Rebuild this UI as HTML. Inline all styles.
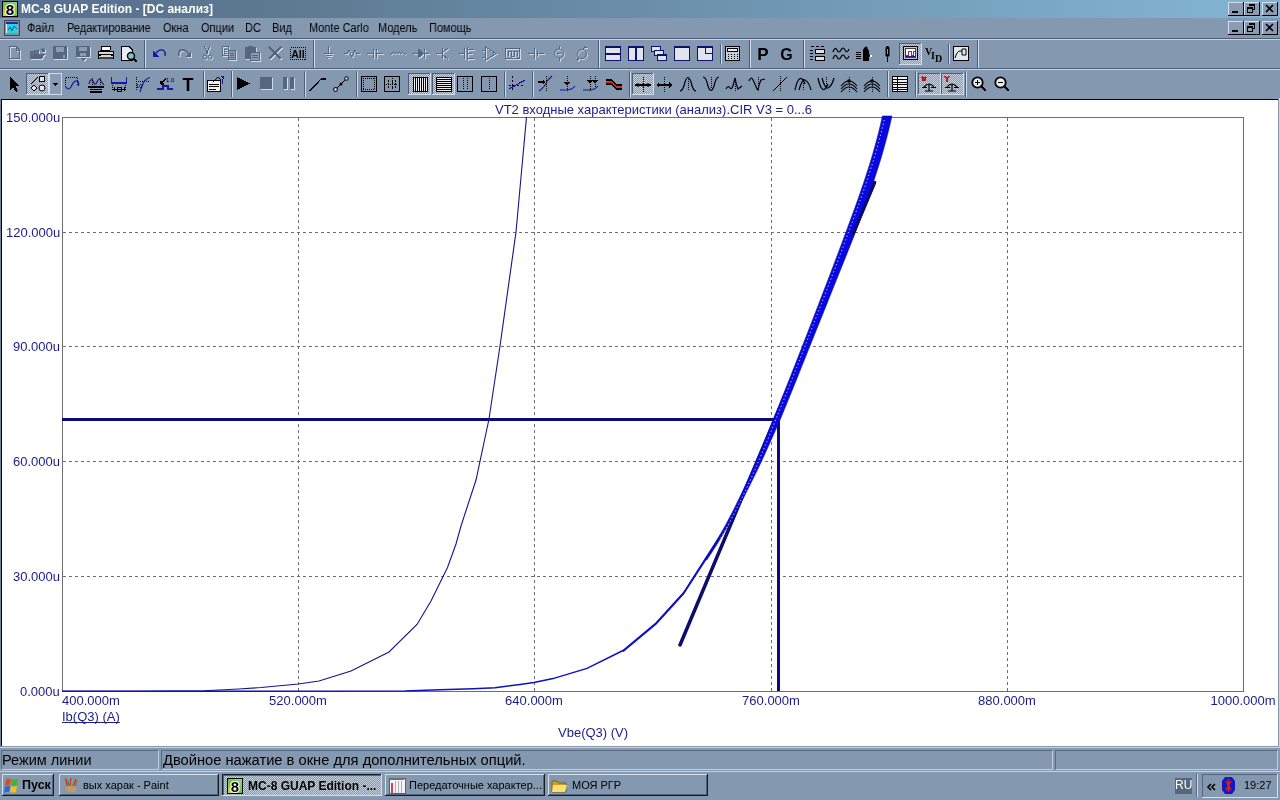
<!DOCTYPE html>
<html><head><meta charset="utf-8">
<style>
*{margin:0;padding:0;box-sizing:border-box}
html,body{width:1280px;height:800px;overflow:hidden;background:#8498b0;font-family:"Liberation Sans",sans-serif;position:relative}
.a{position:absolute}
.t{position:absolute;white-space:nowrap;line-height:1;will-change:transform}
#title{left:0;top:0;width:1280px;height:18px;background:linear-gradient(90deg,#587090 0%,#5c7890 20%,#6a8eaa 50%,#7eaeca 89%,#82b4d2 100%)}
#menu{left:0;top:18px;width:1280px;height:20px}
.mi{font-size:12px;color:#000;top:22px;transform:scaleX(0.915);transform-origin:0 0}
.hl{left:0;width:1280px;height:1px}
.wb{width:16px;height:14px;background:#8a9cb4;border-top:1px solid #d0dcea;border-left:1px solid #d0dcea;border-right:1px solid #000;border-bottom:1px solid #000}
#plot{left:0;top:98px;width:1280px;height:649px;background:#fff}
.ax{font-size:13px;color:#1c1c8a}
#status{left:0;top:747px;width:1280px;height:24px}
.sp{top:750px;height:20px;border-top:1px solid #5a6a84;border-left:1px solid #5a6a84;border-bottom:1px solid #c4d0e0;border-right:1px solid #c4d0e0}
.st{font-size:14.5px;color:#000;top:753px}
#task{left:0;top:771px;width:1280px;height:29px;border-top:1px solid #c8d4e4}
.tb{top:774px;height:23px;border-top:1px solid #d4dfec;border-left:1px solid #d4dfec;border-right:1px solid #1c2430;border-bottom:1px solid #1c2430;background:#8498b0}
.tt{font-size:11px;color:#000;top:780px}
</style></head><body>
<!-- Title bar -->
<div id="title" class="a"></div>
<div class="t" style="left:21px;top:3px;font-size:12px;font-weight:bold;color:#fff">MC-8 GUAP Edition - [DC анализ]</div>
<svg class="a" style="left:2px;top:1px" width="16" height="16" viewBox="0 0 16 16">
<defs><linearGradient id="g8" x1="0" y1="1" x2="1" y2="0"><stop offset="0" stop-color="#d8e040"/><stop offset=".45" stop-color="#70c040"/><stop offset="1" stop-color="#90d890"/></linearGradient></defs>
<rect x="0" y="0" width="16" height="16" fill="#000"/><rect x="1" y="1" width="14" height="14" fill="url(#g8)"/>
<text x="8" y="14" text-anchor="middle" font-family="Liberation Sans" font-weight="bold" font-size="15" fill="#000" stroke="#fff" stroke-width="2.2" paint-order="stroke">8</text>
</svg>

<svg class="a" style="left:1220px;top:0" width="60" height="38" viewBox="1220 0 60 38" shape-rendering="crispEdges">
<rect x="1228" y="2" width="16" height="14" fill="#8a9cb4"/><rect x="1228" y="2" width="16" height="1" fill="#d4dfec"/><rect x="1228" y="2" width="1" height="14" fill="#d4dfec"/><rect x="1228" y="15" width="16" height="1" fill="#000"/><rect x="1243" y="2" width="1" height="14" fill="#000"/><rect x="1232" y="11" width="6" height="2" fill="#000"/><rect x="1244" y="2" width="16" height="14" fill="#8a9cb4"/><rect x="1244" y="2" width="16" height="1" fill="#d4dfec"/><rect x="1244" y="2" width="1" height="14" fill="#d4dfec"/><rect x="1244" y="15" width="16" height="1" fill="#000"/><rect x="1259" y="2" width="1" height="14" fill="#000"/><path d="M1249.5 4.5H1254.5V9.5H1252.5" fill="none" stroke="#000"/><rect x="1249" y="4" width="6" height="2" fill="#000"/><rect x="1247.5" y="7.5" width="5" height="5" fill="none" stroke="#000"/><rect x="1247" y="7" width="6" height="2" fill="#000"/><rect x="1262" y="2" width="16" height="14" fill="#8a9cb4"/><rect x="1262" y="2" width="16" height="1" fill="#d4dfec"/><rect x="1262" y="2" width="1" height="14" fill="#d4dfec"/><rect x="1262" y="15" width="16" height="1" fill="#000"/><rect x="1277" y="2" width="1" height="14" fill="#000"/><path d="M1266 5L1273 12M1273 5L1266 12" stroke="#000" stroke-width="1.6" shape-rendering="auto"/><rect x="1228" y="21" width="16" height="14" fill="#8a9cb4"/><rect x="1228" y="21" width="16" height="1" fill="#d4dfec"/><rect x="1228" y="21" width="1" height="14" fill="#d4dfec"/><rect x="1228" y="34" width="16" height="1" fill="#000"/><rect x="1243" y="21" width="1" height="14" fill="#000"/><rect x="1232" y="30" width="6" height="2" fill="#000"/><rect x="1244" y="21" width="16" height="14" fill="#8a9cb4"/><rect x="1244" y="21" width="16" height="1" fill="#d4dfec"/><rect x="1244" y="21" width="1" height="14" fill="#d4dfec"/><rect x="1244" y="34" width="16" height="1" fill="#000"/><rect x="1259" y="21" width="1" height="14" fill="#000"/><path d="M1249.5 23.5H1254.5V28.5H1252.5" fill="none" stroke="#000"/><rect x="1249" y="23" width="6" height="2" fill="#000"/><rect x="1247.5" y="26.5" width="5" height="5" fill="none" stroke="#000"/><rect x="1247" y="26" width="6" height="2" fill="#000"/><rect x="1262" y="21" width="16" height="14" fill="#8a9cb4"/><rect x="1262" y="21" width="16" height="1" fill="#d4dfec"/><rect x="1262" y="21" width="1" height="14" fill="#d4dfec"/><rect x="1262" y="34" width="16" height="1" fill="#000"/><rect x="1277" y="21" width="1" height="14" fill="#000"/><path d="M1266 24L1273 31M1273 24L1266 31" stroke="#000" stroke-width="1.6" shape-rendering="auto"/></svg>
<!-- Menu bar -->
<svg class="a" style="left:4px;top:20px" width="16" height="16" viewBox="0 0 16 16" shape-rendering="crispEdges">
<rect x="0" y="0" width="16" height="16" fill="#404858"/><rect x="1" y="1" width="14" height="14" fill="#8a8aa0"/>
<rect x="2" y="2" width="12" height="2" fill="#2828a0"/><rect x="2" y="4" width="12" height="9" fill="#20d8e0"/><rect x="2" y="4" width="1" height="9" fill="#f0f0f0"/>
<path d="M4 10L6 7L8 11L10 6L13 9" fill="none" stroke="#1050a0" shape-rendering="auto"/>
</svg>
<div class="t mi" style="left:27px">Файл</div>
<div class="t mi" style="left:67px">Редактирование</div>
<div class="t mi" style="left:163px">Окна</div>
<div class="t mi" style="left:201px">Опции</div>
<div class="t mi" style="left:245px">DC</div>
<div class="t mi" style="left:272px">Вид</div>
<div class="t mi" style="left:309px">Monte Carlo</div>
<div class="t mi" style="left:378px">Модель</div>
<div class="t mi" style="left:429px">Помощь</div>

<div class="a hl" style="top:38px;background:#4e5e78"></div>
<div class="a hl" style="top:39px;background:#c4d4e8"></div>
<div class="a hl" style="top:68px;background:#4e5e78"></div>
<div class="a hl" style="top:69px;background:#c4d4e8"></div>

<svg class="a" style="left:0;top:0" width="1280" height="100" viewBox="0 0 1280 100" shape-rendering="crispEdges">
<!--TB-->
<defs><pattern id="dith" width="2" height="2" patternUnits="userSpaceOnUse"><rect width="2" height="2" fill="#8498b0"/><rect width="1" height="1" fill="#c8d4e2"/><rect x="1" y="1" width="1" height="1" fill="#c8d4e2"/></pattern></defs>
<g transform="translate(10,47)" style="--c:#d0dcea"><path d="M0.5 0.5H7L10.5 4V12.5H0.5Z" fill="none" stroke="#d0dcea"/><path d="M7 0.5V4.5H10.5" fill="none" stroke="#d0dcea"/></g>
<g transform="translate(9,46)"><path d="M0.5 0.5H7L10.5 4V12.5H0.5Z" fill="none" stroke="#56667e"/><path d="M7 0.5V4.5H10.5" fill="none" stroke="#56667e"/></g>
<g transform="translate(31,48)" style="--c:#d0dcea"><path d="M0 4H3L4 3H9V12H0Z" fill="#d0dcea" opacity=".9"/><path d="M1 12L4 7H15L12 12Z" fill="#d0dcea"/><path shape-rendering="auto" d="M10 3Q12 0 14 2L15 1V5H11L12 4Q11 2 10 3" fill="#d0dcea"/></g>
<g transform="translate(30,47)"><path d="M0 4H3L4 3H9V12H0Z" fill="#56667e" opacity=".9"/><path d="M1 12L4 7H15L12 12Z" fill="#56667e"/><path shape-rendering="auto" d="M10 3Q12 0 14 2L15 1V5H11L12 4Q11 2 10 3" fill="#56667e"/></g>
<g transform="translate(54,47)" style="--c:#d0dcea"><path d="M0 0H14V13H0Z" fill="#d0dcea"/><rect x="3" y="1" width="8" height="5" fill="#8a9cb2"/><rect x="10" y="9" width="2" height="3" fill="#8a9cb2"/></g>
<g transform="translate(53,46)"><path d="M0 0H14V13H0Z" fill="#56667e"/><rect x="3" y="1" width="8" height="5" fill="#8a9cb2"/><rect x="10" y="9" width="2" height="3" fill="#8a9cb2"/></g>
<g transform="translate(77,47)" style="--c:#d0dcea"><path d="M0 0H14V11H0Z" fill="#d0dcea"/><rect x="3" y="1" width="8" height="4" fill="#8a9cb2"/><rect x="4" y="7" width="6" height="3" fill="#8a9cb2"/><path d="M4 12H10L7 15Z" fill="#d0dcea"/></g>
<g transform="translate(76,46)"><path d="M0 0H14V11H0Z" fill="#56667e"/><rect x="3" y="1" width="8" height="4" fill="#8a9cb2"/><rect x="4" y="7" width="6" height="3" fill="#8a9cb2"/><path d="M4 12H10L7 15Z" fill="#56667e"/></g>
<g transform="translate(98,46)"><path d="M4 0H13L12 4H3Z" fill="#fff" stroke="#000" stroke-width="1"/><path d="M0.5 5.5H15.5V12.5H0.5Z" fill="#d8d8d8" stroke="#000"/><rect x="1" y="8" width="14" height="2" fill="#000"/><rect x="3" y="9" width="10" height="1" fill="#e0e0a0"/><rect x="1" y="11" width="14" height="2" fill="#404040"/></g>
<g transform="translate(121,46)"><path d="M0.5 0.5H8L11.5 4V14.5H0.5Z" fill="#e8ecf0" stroke="#000"/><circle shape-rendering="auto" cx="10" cy="10" r="3.5" fill="#80c0d0" stroke="#000" stroke-width="1.4"/><path d="M12.5 12.5L16 16" stroke="#000" stroke-width="2"/></g>
<rect x="144" y="40" width="1" height="28" fill="#4e5e78"/><rect x="145" y="40" width="1" height="28" fill="#d0dcea"/>
<g transform="translate(153,48)"><path shape-rendering="auto" d="M2 6Q6 1 10 2Q13 4 12 8" fill="none" stroke="#1818a0" stroke-width="1.4"/><path d="M0 3L0 9L6 9Z" fill="#1818a0"/></g>
<g transform="translate(178,49)" style="--c:#d0dcea"><path shape-rendering="auto" d="M12 6Q8 1 4 2Q1 4 2 8" fill="none" stroke="#d0dcea" stroke-width="1.6"/><path d="M14 3L14 9L8 9Z" fill="#d0dcea"/></g>
<g transform="translate(177,48)"><path shape-rendering="auto" d="M12 6Q8 1 4 2Q1 4 2 8" fill="none" stroke="#56667e" stroke-width="1.6"/><path d="M14 3L14 9L8 9Z" fill="#56667e"/></g>
<g transform="translate(203,47)" style="--c:#d0dcea"><path d="M2 0L6 8M8 0L4 8" stroke="#d0dcea" stroke-width="1.2" fill="none"/><circle shape-rendering="auto" cx="3" cy="11" r="2" fill="none" stroke="#d0dcea"/><circle shape-rendering="auto" cx="8" cy="11" r="2" fill="none" stroke="#d0dcea"/></g>
<g transform="translate(202,46)"><path d="M2 0L6 8M8 0L4 8" stroke="#56667e" stroke-width="1.2" fill="none"/><circle shape-rendering="auto" cx="3" cy="11" r="2" fill="none" stroke="#56667e"/><circle shape-rendering="auto" cx="8" cy="11" r="2" fill="none" stroke="#56667e"/></g>
<g transform="translate(223,47)" style="--c:#d0dcea"><path d="M0.5 0.5H6.5V9.5H0.5Z" fill="none" stroke="#d0dcea"/><path d="M1.5 3H5M1.5 5H5M1.5 7H5" stroke="#d0dcea"/><path d="M6.5 4.5H13.5V13.5H6.5Z" fill="#8a9cb2" stroke="#d0dcea"/><path d="M8 7H12M8 9H12M8 11H12" stroke="#d0dcea"/></g>
<g transform="translate(222,46)"><path d="M0.5 0.5H6.5V9.5H0.5Z" fill="none" stroke="#56667e"/><path d="M1.5 3H5M1.5 5H5M1.5 7H5" stroke="#56667e"/><path d="M6.5 4.5H13.5V13.5H6.5Z" fill="#8a9cb2" stroke="#56667e"/><path d="M8 7H12M8 9H12M8 11H12" stroke="#56667e"/></g>
<g transform="translate(246,47)" style="--c:#d0dcea"><path d="M0 1H11V13H0Z" fill="#d0dcea"/><rect x="3" y="0" width="5" height="3" fill="#d0dcea"/><path d="M5.5 6.5H14.5V14.5H5.5Z" fill="#8a9cb2" stroke="#d0dcea"/><path d="M7 9H13M7 11H13" stroke="#d0dcea"/></g>
<g transform="translate(245,46)"><path d="M0 1H11V13H0Z" fill="#56667e"/><rect x="3" y="0" width="5" height="3" fill="#56667e"/><path d="M5.5 6.5H14.5V14.5H5.5Z" fill="#8a9cb2" stroke="#56667e"/><path d="M7 9H13M7 11H13" stroke="#56667e"/></g>
<g transform="translate(269,48)" style="--c:#d0dcea"><path d="M1 0L13 12M13 0L1 12" stroke="#d0dcea" stroke-width="1.6"/></g>
<g transform="translate(268,47)"><path d="M1 0L13 12M13 0L1 12" stroke="#56667e" stroke-width="1.6"/></g>
<g transform="translate(290,47)"><rect x="0.5" y="0.5" width="15" height="12" fill="none" stroke="#000" stroke-dasharray="1 1"/><text x="8" y="10.5" font-family="Liberation Sans" font-weight="bold" font-size="10.5" text-anchor="middle" fill="#000">All</text></g>
<rect x="313" y="40" width="1" height="28" fill="#4e5e78"/><rect x="314" y="40" width="1" height="28" fill="#d0dcea"/>
<g transform="translate(322,47)" style="--c:#d0dcea"><path d="M7.5 0V7M3 7.5H12M4.5 9.5H10.5M6 11.5H9" stroke="#d0dcea" fill="none"/></g>
<g transform="translate(321,46)"><path d="M7.5 0V7M3 7.5H12M4.5 9.5H10.5M6 11.5H9" stroke="#56667e" fill="none"/></g>
<g transform="translate(345,47)" style="--c:#d0dcea"><path d="M0 7.5H3L5 4L8 11L11 4L13 7.5H16" stroke="#d0dcea" fill="none"/></g>
<g transform="translate(344,46)"><path d="M0 7.5H3L5 4L8 11L11 4L13 7.5H16" stroke="#56667e" fill="none"/></g>
<g transform="translate(368,47)" style="--c:#d0dcea"><path d="M0 7.5H6M10 7.5H16M6.5 3V12M9.5 3V12" stroke="#d0dcea" fill="none"/></g>
<g transform="translate(367,46)"><path d="M0 7.5H6M10 7.5H16M6.5 3V12M9.5 3V12" stroke="#56667e" fill="none"/></g>
<g transform="translate(391,47)" style="--c:#d0dcea"><path shape-rendering="auto" d="M0 8H2Q3 4 5 8Q6 4 8 8Q9 4 11 8Q12 4 14 8H16" stroke="#d0dcea" fill="none"/></g>
<g transform="translate(390,46)"><path shape-rendering="auto" d="M0 8H2Q3 4 5 8Q6 4 8 8Q9 4 11 8Q12 4 14 8H16" stroke="#56667e" fill="none"/></g>
<g transform="translate(414,47)" style="--c:#d0dcea"><path d="M0 7.5H16M5 3L11 7.5L5 12Z M11.5 3V12" stroke="#d0dcea" fill="#d0dcea"/></g>
<g transform="translate(413,46)"><path d="M0 7.5H16M5 3L11 7.5L5 12Z M11.5 3V12" stroke="#56667e" fill="#56667e"/></g>
<g transform="translate(437,47)" style="--c:#d0dcea"><path d="M0 7.5H6M6.5 2V13M7 6L12 2M7 9L12 13" stroke="#d0dcea" fill="none"/></g>
<g transform="translate(436,46)"><path d="M0 7.5H6M6.5 2V13M7 6L12 2M7 9L12 13" stroke="#56667e" fill="none"/></g>
<g transform="translate(460,47)" style="--c:#d0dcea"><path d="M0 7.5H5M5.5 2V13M8.5 1V14M9 3H15M9 7.5H13M9 12H15" stroke="#d0dcea" fill="none"/></g>
<g transform="translate(459,46)"><path d="M0 7.5H5M5.5 2V13M8.5 1V14M9 3H15M9 7.5H13M9 12H15" stroke="#56667e" fill="none"/></g>
<g transform="translate(483,47)" style="--c:#d0dcea"><path d="M3.5 1V14L14 7.5Z M0 4H3M0 11H3" stroke="#d0dcea" fill="none"/></g>
<g transform="translate(482,46)"><path d="M3.5 1V14L14 7.5Z M0 4H3M0 11H3" stroke="#56667e" fill="none"/></g>
<g transform="translate(506,47)" style="--c:#d0dcea"><path d="M0.5 2.5H14.5V12.5H0.5Z M3 10V5H6V10H9V5H12V10" stroke="#d0dcea" fill="none"/></g>
<g transform="translate(505,46)"><path d="M0.5 2.5H14.5V12.5H0.5Z M3 10V5H6V10H9V5H12V10" stroke="#56667e" fill="none"/></g>
<g transform="translate(529,47)" style="--c:#d0dcea"><path d="M0 7.5H6M10 7.5H16M6.5 2V13M9.5 5V10" stroke="#d0dcea" fill="none"/></g>
<g transform="translate(528,46)"><path d="M0 7.5H6M10 7.5H16M6.5 2V13M9.5 5V10" stroke="#56667e" fill="none"/></g>
<g transform="translate(552,47)" style="--c:#d0dcea"><circle shape-rendering="auto" cx="8" cy="7.5" r="4.5" stroke="#d0dcea" fill="none"/><path d="M8 0V3M8 12V15M6 7H10" stroke="#d0dcea"/></g>
<g transform="translate(551,46)"><circle shape-rendering="auto" cx="8" cy="7.5" r="4.5" stroke="#56667e" fill="none"/><path d="M8 0V3M8 12V15M6 7H10" stroke="#56667e"/></g>
<g transform="translate(575,47)" style="--c:#d0dcea"><circle shape-rendering="auto" cx="8" cy="8" r="4.5" stroke="#d0dcea" fill="none"/><path d="M11 0L9 4M5 12L3 15M10 1H13" stroke="#d0dcea"/></g>
<g transform="translate(574,46)"><circle shape-rendering="auto" cx="8" cy="8" r="4.5" stroke="#56667e" fill="none"/><path d="M11 0L9 4M5 12L3 15M10 1H13" stroke="#56667e"/></g>
<rect x="598" y="40" width="1" height="28" fill="#4e5e78"/><rect x="599" y="40" width="1" height="28" fill="#d0dcea"/>
<g transform="translate(605,46)"><rect x="0.5" y="0.5" width="15" height="14" fill="#e0e4ec" stroke="#10106e"/><rect x="0" y="0" width="16" height="2" fill="#10106e"/><rect x="0" y="7" width="16" height="2" fill="#10106e"/></g>
<g transform="translate(628,46)"><rect x="0.5" y="0.5" width="15" height="14" fill="#e0e4ec" stroke="#10106e"/><rect x="0" y="0" width="16" height="2" fill="#10106e"/><rect x="7" y="0" width="2" height="15" fill="#10106e"/></g>
<g transform="translate(651,46)"><rect x="0.5" y="0.5" width="9" height="5" fill="#e0e4ec" stroke="#10106e"/><rect x="3.5" y="4.5" width="9" height="5" fill="#e0e4ec" stroke="#10106e"/><rect x="6.5" y="8.5" width="9" height="6" fill="#e0e4ec" stroke="#10106e"/><rect x="6" y="8" width="10" height="2" fill="#10106e"/></g>
<g transform="translate(674,46)"><rect x="0.5" y="0.5" width="15" height="14" fill="#e0e4ec" stroke="#10106e"/><rect x="0" y="0" width="16" height="2" fill="#10106e"/></g>
<g transform="translate(697,46)"><rect x="0.5" y="0.5" width="15" height="14" fill="#e0e4ec" stroke="#10106e"/><rect x="0" y="0" width="16" height="2" fill="#10106e"/><path d="M8.5 1V7.5H15" fill="none" stroke="#10106e"/></g>
<rect x="720" y="44" width="1" height="20" fill="#4e5e78"/><rect x="721" y="44" width="1" height="20" fill="#d0dcea"/>
<g transform="translate(725,46)"><rect x="0.5" y="0.5" width="14" height="14" rx="1" fill="#c8ccd4" stroke="#000"/><rect x="2.5" y="2.5" width="10" height="3" fill="#e8ecf0" stroke="#000"/><path d="M3 8H4M6 8H7M9 8H10M12 8H13M3 10H4M6 10H7M9 10H10M12 10H13M3 12H4M6 12H7M9 12H10M12 12H13" stroke="#000"/></g>
<rect x="749" y="40" width="1" height="28" fill="#4e5e78"/><rect x="750" y="40" width="1" height="28" fill="#d0dcea"/>
<text x="763" y="60" font-family="Liberation Sans" font-weight="bold" font-size="17" text-anchor="middle" fill="#000">P</text>
<text x="786.5" y="60" font-family="Liberation Sans" font-weight="bold" font-size="16" text-anchor="middle" fill="#000">G</text>
<rect x="803" y="40" width="1" height="28" fill="#4e5e78"/><rect x="804" y="40" width="1" height="28" fill="#d0dcea"/>
<g transform="translate(810,46)"><path d="M1 0.5H4M6 0.5H9M11 0.5H14" stroke="#000" stroke-width="1.4"/><path d="M0 4H3M0 7H3M0 10H3M0 13H3" stroke="#000"/><rect x="5.5" y="3.5" width="9" height="4" fill="#e0e0e0" stroke="#000"/><rect x="5.5" y="10.5" width="9" height="4" fill="#e0e0e0" stroke="#000"/></g>
<g transform="translate(833,46)"><path shape-rendering="auto" d="M0 6Q2 0 4 4Q6 8 8 4Q10 0 12 4Q14 8 16 3M0 13Q2 7 4 11Q6 15 8 11Q10 7 12 11Q14 15 16 10" fill="none" stroke="#000" stroke-width="1.2"/></g>
<g transform="translate(856,46)"><path d="M0 6H5M0 8H5M0 10H5M0 12H5" stroke="#000"/><path shape-rendering="auto" d="M9 2Q7 2 7 5V15H13V11L15 10L13 8V5Q12 2 9 2Z" fill="#000"/><circle shape-rendering="auto" cx="10" cy="2" r="1.6" fill="#000"/><rect x="14" y="9" width="2" height="2" fill="#fff"/></g>
<g transform="translate(885,46)"><path shape-rendering="auto" d="M2.5 0Q0.5 0 0.5 3V10L2.5 11L4.5 10V3Q4.5 0 2.5 0Z" fill="#000"/><path d="M2.5 11V16" stroke="#000" stroke-width="1.4"/><rect x="2" y="3" width="1" height="5" fill="#8a9cb2"/></g>
<rect x="899" y="43" width="23" height="22" fill="url(#dith)"/>
<rect x="899" y="43" width="23" height="1" fill="#4e5e78"/><rect x="899" y="43" width="1" height="22" fill="#4e5e78"/>
<rect x="899" y="64" width="23" height="1" fill="#d0dcea"/><rect x="921" y="43" width="1" height="22" fill="#d0dcea"/>
<g transform="translate(903,46)"><rect x="0.5" y="0.5" width="14" height="13" fill="#c8c8d0" stroke="#000"/><rect x="2.5" y="2.5" width="10" height="9" fill="#fff" stroke="#404040"/><path d="M3 9H5V5H8V9H10V5H12" fill="none" stroke="#c02020"/><path d="M3 10H12" stroke="#1818a0"/></g>
<g transform="translate(925,46)"><text x="0" y="9" font-family="Liberation Serif" font-weight="bold" font-size="10" fill="#000">V</text><text x="6" y="13" font-family="Liberation Serif" font-weight="bold" font-size="10" fill="#000">I</text><text x="10" y="16" font-family="Liberation Serif" font-weight="bold" font-size="10" fill="#000">D</text></g>
<rect x="948" y="44" width="1" height="20" fill="#4e5e78"/><rect x="949" y="44" width="1" height="20" fill="#d0dcea"/>
<g transform="translate(953,46)"><rect x="0.5" y="0.5" width="15" height="14" fill="#e4e8ee" stroke="#000" stroke-width="1.2"/><path shape-rendering="auto" d="M2 12Q4 5 7 5H9V3H13V9H9V5" fill="none" stroke="#000"/></g>
<rect x="977" y="40" width="1" height="28" fill="#4e5e78"/><rect x="978" y="40" width="1" height="28" fill="#d0dcea"/>
<g transform="translate(10,77)"><path d="M0 0V13L3 10L6 15L8 14L5.5 9H9.5Z" fill="#000"/></g>
<rect x="26" y="73" width="23" height="22" fill="url(#dith)"/>
<rect x="26" y="73" width="23" height="1" fill="#4e5e78"/><rect x="26" y="73" width="1" height="22" fill="#4e5e78"/>
<rect x="26" y="94" width="23" height="1" fill="#d0dcea"/><rect x="48" y="73" width="1" height="22" fill="#d0dcea"/>
<g transform="translate(30,76)"><path d="M1 8L8 1" stroke="#000" stroke-width="1.2"/><rect x="9.5" y="0.5" width="5" height="5" fill="#e0e4ea" stroke="#000"/><path d="M4 9L7 12L4 15L1 12Z" fill="#e0e4ea" stroke="#000"/><circle shape-rendering="auto" cx="12" cy="12" r="3" fill="#e0e4ea" stroke="#000" shape-rendering="auto"/></g>
<rect x="49" y="73" width="13" height="22" fill="#8a9cb4"/><rect x="49" y="73" width="13" height="1" fill="#d0dcea"/><rect x="49" y="73" width="1" height="22" fill="#d0dcea"/><rect x="49" y="94" width="13" height="1" fill="#d0dcea"/><rect x="61" y="73" width="1" height="22" fill="#d0dcea"/>
<path d="M52 83H58L55 86Z" fill="#000"/>
<g transform="translate(65,77)"><path d="M0.5 0.5H12.5V8" fill="none" stroke="#000" stroke-dasharray="1 1"/><path d="M0.5 0.5V10" fill="none" stroke="#000" stroke-dasharray="1 1"/><path shape-rendering="auto" d="M1 10Q3 14 6 10Q9 3 12 4Q15 6 13 9" fill="none" stroke="#1818a0" stroke-width="1.2"/></g>
<g transform="translate(88,77)"><path shape-rendering="auto" d="M1 7Q3 0 5 4Q7 10 9 5Q11 0 13 4L16 8" fill="none" stroke="#1818a0" stroke-width="1.2"/><path d="M0 10H16M2 12.5H14M2 15H14" stroke="#000" stroke-width="1.2"/><path d="M4 1V9M12 1V9" stroke="#000" stroke-dasharray="1 1"/></g>
<g transform="translate(111,77)"><path d="M0.5 0V6H15.5V0" fill="none" stroke="#1818a0" stroke-width="1.2"/><path d="M1.5 6V13M14.5 6V13" stroke="#000" stroke-dasharray="1 1"/><path d="M2 12H14M3 10V14M13 10V14" stroke="#000"/><rect x="6" y="10" width="4" height="4" fill="none" stroke="#000"/></g>
<g transform="translate(135,77)"><path d="M1.5 0V14" stroke="#000" stroke-dasharray="1 1"/><path d="M1 4H15" stroke="#000" stroke-dasharray="1 1"/><path shape-rendering="auto" d="M5 15Q9 2 11 3Q13 0 15 1" fill="none" stroke="#1818a0" stroke-width="1.2"/><text x="1" y="11" font-family="Liberation Sans" font-size="6" fill="#000">10</text></g>
<g transform="translate(157,76)"><path d="M0 13H6V10H11V13H16" fill="none" stroke="#1818a0" stroke-width="1.4"/><path d="M9 2L4 8M4 8V5M4 8H7" stroke="#000" stroke-width="1.2" fill="none"/><text x="9" y="6" font-family="Liberation Sans" font-size="6" fill="#000">1.0</text></g>
<text x="188" y="91" font-family="Liberation Sans" font-weight="bold" font-size="18" text-anchor="middle" fill="#000">T</text>
<rect x="203" y="71" width="1" height="26" fill="#4e5e78"/><rect x="204" y="71" width="1" height="26" fill="#d0dcea"/>
<g transform="translate(207,76)"><path d="M0.5 4.5H13.5V15.5H0.5Z" fill="#f0f0f0" stroke="#000" stroke-width="1.2"/><path d="M2 8H12M2 10.5H12M2 13H9" stroke="#000"/><path d="M6 6L11 1L14 4" fill="none" stroke="#000" stroke-width="1.4"/><path d="M13 0H17V4Z" fill="#1818a0"/><path d="M15.5 3V8" stroke="#1818a0" stroke-width="1.4"/></g>
<rect x="231" y="71" width="1" height="26" fill="#4e5e78"/><rect x="232" y="71" width="1" height="26" fill="#d0dcea"/>
<g transform="translate(237,77)"><path d="M0 0L13 6.5L0 13Z" fill="#000"/></g>
<g transform="translate(261,78)" style="--c:#d0dcea"><rect x="0" y="0" width="12" height="12" fill="#d0dcea"/></g>
<g transform="translate(260,77)"><rect x="0" y="0" width="12" height="12" fill="#56667e"/></g>
<g transform="translate(284,78)" style="--c:#d0dcea"><rect x="0" y="0" width="4" height="12" fill="#d0dcea"/><rect x="7" y="0" width="4" height="12" fill="#d0dcea"/></g>
<g transform="translate(283,77)"><rect x="0" y="0" width="4" height="12" fill="#56667e"/><rect x="7" y="0" width="4" height="12" fill="#56667e"/></g>
<rect x="304" y="71" width="1" height="26" fill="#4e5e78"/><rect x="305" y="71" width="1" height="26" fill="#d0dcea"/>
<g transform="translate(310,77)"><path d="M0 14L9 4L11 2H16" fill="none" stroke="#000" stroke-width="1.4"/></g>
<g transform="translate(333,77)"><path d="M2 13L13 2" stroke="#000" stroke-width="1.2"/><circle shape-rendering="auto" cx="2.5" cy="12.5" r="2" fill="#c0c8d0" stroke="#000"/><circle shape-rendering="auto" cx="8" cy="7" r="1.5" fill="#000"/><circle shape-rendering="auto" cx="13.5" cy="1.5" r="1.8" fill="#c0c8d0" stroke="#000"/></g>
<rect x="356" y="71" width="1" height="26" fill="#4e5e78"/><rect x="357" y="71" width="1" height="26" fill="#d0dcea"/>
<g transform="translate(361,76)"><rect x="0.5" y="0.5" width="15" height="15" fill="none" stroke="#000" stroke-width="1.2"/><path d="M2.5 2V14M13.5 2V14M2 2.5H14M2 13.5H14" stroke="#000" stroke-dasharray="1 1"/></g>
<g transform="translate(384,76)"><rect x="0.5" y="0.5" width="15" height="15" fill="none" stroke="#000" stroke-width="1.2"/><path d="M4 5H5M7.5 5H8.5M11 5H12M4 8H5M7.5 8H8.5M11 8H12M4 11H5M7.5 11H8.5M11 11H12" stroke="#000" stroke-width="1.5"/><path d="M8 2V14M2 8H14" stroke="#000" stroke-dasharray="1 1"/></g>
<rect x="408" y="73" width="23" height="22" fill="url(#dith)"/>
<rect x="408" y="73" width="23" height="1" fill="#4e5e78"/><rect x="408" y="73" width="1" height="22" fill="#4e5e78"/>
<rect x="408" y="94" width="23" height="1" fill="#d0dcea"/><rect x="430" y="73" width="1" height="22" fill="#d0dcea"/>
<rect x="413" y="77" width="15" height="15" fill="#000"/><rect x="414" y="78" width="1" height="13" fill="#f0f0f0"/><rect x="416" y="78" width="1" height="13" fill="#f0f0f0"/><rect x="418" y="78" width="1" height="13" fill="#f0f0f0"/><rect x="420" y="78" width="1" height="13" fill="#f0f0f0"/><rect x="422" y="78" width="1" height="13" fill="#f0f0f0"/><rect x="424" y="78" width="1" height="13" fill="#f0f0f0"/><rect x="426" y="78" width="1" height="13" fill="#f0f0f0"/>
<rect x="432" y="73" width="23" height="22" fill="url(#dith)"/>
<rect x="432" y="73" width="23" height="1" fill="#4e5e78"/><rect x="432" y="73" width="1" height="22" fill="#4e5e78"/>
<rect x="432" y="94" width="23" height="1" fill="#d0dcea"/><rect x="454" y="73" width="1" height="22" fill="#d0dcea"/>
<rect x="436" y="77" width="16" height="15" fill="#000"/><rect x="437" y="78" width="14" height="1" fill="#f0f0f0"/><rect x="437" y="80" width="14" height="1" fill="#f0f0f0"/><rect x="437" y="82" width="14" height="1" fill="#f0f0f0"/><rect x="437" y="84" width="14" height="1" fill="#f0f0f0"/><rect x="437" y="86" width="14" height="1" fill="#f0f0f0"/><rect x="437" y="88" width="14" height="1" fill="#f0f0f0"/><rect x="437" y="90" width="14" height="1" fill="#f0f0f0"/>
<g transform="translate(457,76)"><rect x="0.5" y="0.5" width="15" height="15" fill="none" stroke="#000" stroke-width="1.2"/><path d="M6 2V14M10 2V14" stroke="#000" stroke-dasharray="1 1"/></g>
<g transform="translate(481,76)"><rect x="0.5" y="0.5" width="15" height="15" fill="none" stroke="#000" stroke-width="1.2"/><path d="M8 2V14" stroke="#000" stroke-dasharray="1 1"/></g>
<rect x="504" y="71" width="1" height="26" fill="#4e5e78"/><rect x="505" y="71" width="1" height="26" fill="#d0dcea"/>
<g transform="translate(509,76)"><path d="M0 13L16 4" stroke="#1818a0" stroke-width="1.2"/><path d="M3.5 0V16M0 9H16" stroke="#000" stroke-dasharray="2 2"/></g>
<rect x="532" y="71" width="1" height="26" fill="#4e5e78"/><rect x="533" y="71" width="1" height="26" fill="#d0dcea"/>
<g transform="translate(538,76)"><path shape-rendering="auto" d="M1 15Q8 10 9 5L14 0" fill="none" stroke="#1818a0" stroke-width="1.2"/><path d="M8 0V16" stroke="#000" stroke-dasharray="1 1"/><path d="M0 6H7M5 4L7 6L5 8" stroke="#000" stroke-width="1.4" fill="none"/></g>
<g transform="translate(560,76)"><path shape-rendering="auto" d="M0 14H6Q12 14 15 10" fill="none" stroke="#1818a0" stroke-width="1.2"/><path d="M7 0V16" stroke="#000" stroke-dasharray="1 1"/><path d="M4 6L7 10L10 6Z" fill="#000"/></g>
<g transform="translate(583,76)"><path shape-rendering="auto" d="M0 14H6Q12 14 15 10" fill="none" stroke="#1818a0" stroke-width="1.2"/><path d="M7 0V16M12 0V12" stroke="#000" stroke-dasharray="1 1"/><path d="M4 4L7 8L10 4ZM9 4L12 8L15 4Z" fill="#000"/></g>
<g transform="translate(606,78)"><path d="M0 2H6L10 7H16" fill="none" stroke="#000" stroke-width="1.2"/><path d="M0 4H6L10 9H16" fill="none" stroke="#d03030" stroke-width="1.2"/><path d="M0 6H6L10 11H16" fill="none" stroke="#000" stroke-width="1.2"/></g>
<rect x="629" y="71" width="1" height="26" fill="#4e5e78"/><rect x="630" y="71" width="1" height="26" fill="#d0dcea"/>
<rect x="632" y="73" width="22" height="22" fill="url(#dith)"/>
<rect x="632" y="73" width="22" height="1" fill="#4e5e78"/><rect x="632" y="73" width="1" height="22" fill="#4e5e78"/>
<rect x="632" y="94" width="22" height="1" fill="#d0dcea"/><rect x="653" y="73" width="1" height="22" fill="#d0dcea"/>
<g transform="translate(635,77)"><path d="M8 0V15" stroke="#000" stroke-dasharray="1 1"/><path d="M0 8H16" stroke="#000" stroke-width="1.4"/><circle shape-rendering="auto" cx="3" cy="8" r="1.7" fill="#000"/><circle shape-rendering="auto" cx="8" cy="8" r="1.7" fill="#000"/><circle shape-rendering="auto" cx="13" cy="8" r="1.7" fill="#000"/></g>
<g transform="translate(656,77)"><path d="M8 0V15" stroke="#000" stroke-dasharray="1 1"/><path d="M1 8H15" stroke="#000" stroke-width="1.4"/><path d="M0 8L3 5V11ZM16 8L13 5V11Z" fill="#000"/></g>
<g transform="translate(680,76)"><path shape-rendering="auto" d="M0 15Q3 15 5 6Q8 -3 11 6Q13 15 16 15" fill="none" stroke="#000" stroke-width="1.2"/><path d="M8 3V15" stroke="#000" stroke-dasharray="1 1"/></g>
<g transform="translate(703,76)"><path shape-rendering="auto" d="M0 1Q3 1 5 10Q8 19 11 10Q13 1 16 1" fill="none" stroke="#000" stroke-width="1.2"/><path d="M8 1V13" stroke="#000" stroke-dasharray="1 1"/></g>
<g transform="translate(726,76)"><path shape-rendering="auto" d="M0 13Q2 9 4 12Q6 15 8 6L9 2Q10 8 12 13L16 10" fill="none" stroke="#000" stroke-width="1.2"/><path d="M9 2V15" stroke="#000" stroke-dasharray="1 1"/></g>
<g transform="translate(749,76)"><path shape-rendering="auto" d="M0 5Q2 0 4 4Q6 8 8 13L9 14Q10 8 12 4L16 3" fill="none" stroke="#000" stroke-width="1.2"/><path d="M9 1V14" stroke="#000" stroke-dasharray="1 1"/></g>
<g transform="translate(772,76)"><path d="M1 15L15 1" stroke="#000" stroke-width="1.2"/><path d="M8 0V16" stroke="#000" stroke-dasharray="1 1"/></g>
<g transform="translate(795,76)"><path shape-rendering="auto" d="M0 14Q3 0 7 3Q9 5 10 8M4 14Q7 3 10 4Q14 6 16 14" fill="none" stroke="#000" stroke-width="1.2"/><path d="M8 3V15" stroke="#000" stroke-dasharray="1 1"/></g>
<g transform="translate(818,76)"><path shape-rendering="auto" d="M0 2Q3 16 7 13Q9 11 10 8M4 2Q7 13 10 12Q14 10 16 2" fill="none" stroke="#000" stroke-width="1.2"/><path d="M8 1V13" stroke="#000" stroke-dasharray="1 1"/></g>
<g transform="translate(841,76)"><path shape-rendering="auto" d="M0 10Q8 0 16 10M0 13Q8 3 16 13M0 16Q8 6 16 16" fill="none" stroke="#000" stroke-width="1.2"/><path d="M8 1V16" stroke="#000" stroke-dasharray="1 1"/><circle shape-rendering="auto" cx="8" cy="5" r="1.8" fill="#000"/></g>
<g transform="translate(864,76)"><path shape-rendering="auto" d="M0 10Q8 0 16 10M0 13Q8 3 16 13M0 16Q8 6 16 16" fill="none" stroke="#000" stroke-width="1.2"/><path d="M8 1V16" stroke="#000" stroke-dasharray="1 1"/><circle shape-rendering="auto" cx="8" cy="5" r="1.8" fill="#000"/></g>
<rect x="887" y="71" width="1" height="26" fill="#4e5e78"/><rect x="888" y="71" width="1" height="26" fill="#d0dcea"/>
<g transform="translate(892,76)"><rect x="0.5" y="0.5" width="15" height="15" fill="#f0f0f0" stroke="#000" stroke-width="1.2"/><path d="M1 3.5H15M1 6H15M1 8.5H15M1 11H15M1 13.5H15M5.5 1V15" stroke="#000"/></g>
<rect x="915" y="71" width="1" height="26" fill="#4e5e78"/><rect x="916" y="71" width="1" height="26" fill="#d0dcea"/>
<rect x="918" y="73" width="23" height="22" fill="url(#dith)"/>
<rect x="918" y="73" width="23" height="1" fill="#4e5e78"/><rect x="918" y="73" width="1" height="22" fill="#4e5e78"/>
<rect x="918" y="94" width="23" height="1" fill="#d0dcea"/><rect x="940" y="73" width="1" height="22" fill="#d0dcea"/>
<g transform="translate(921,76)"><path d="M1 1L5 5M5 1L1 5" stroke="#c01818" stroke-width="1.8"/><path shape-rendering="auto" d="M3 11Q8 5 13 11M8 8V15M4 15H12" fill="none" stroke="#000" stroke-width="1.2"/><path d="M1 11H6M10 11H15" stroke="#000"/></g>
<rect x="941" y="73" width="23" height="22" fill="url(#dith)"/>
<rect x="941" y="73" width="23" height="1" fill="#4e5e78"/><rect x="941" y="73" width="1" height="22" fill="#4e5e78"/>
<rect x="941" y="94" width="23" height="1" fill="#d0dcea"/><rect x="963" y="73" width="1" height="22" fill="#d0dcea"/>
<g transform="translate(944,76)"><path d="M1 0L3 3L5 0M3 3V6" stroke="#c01818" stroke-width="1.6" fill="none"/><path shape-rendering="auto" d="M3 11Q8 5 13 11M8 8V15M4 15H12" fill="none" stroke="#000" stroke-width="1.2"/><path d="M1 11H6M10 11H15" stroke="#000"/></g>
<rect x="965" y="71" width="1" height="26" fill="#4e5e78"/><rect x="966" y="71" width="1" height="26" fill="#d0dcea"/>
<g transform="translate(971,76)"><circle shape-rendering="auto" cx="6.5" cy="6.5" r="5.2" fill="#e8ecf0" stroke="#000" stroke-width="1.8"/><path d="M4 6.5H9M6.5 4V9" stroke="#000" stroke-width="1.6"/><path d="M10.5 10.5L15 15" stroke="#000" stroke-width="2.4"/></g>
<g transform="translate(994,76)"><circle shape-rendering="auto" cx="6.5" cy="6.5" r="5.2" fill="#e8ecf0" stroke="#000" stroke-width="1.8"/><path d="M4 6.5H9" stroke="#000" stroke-width="1.6"/><path d="M10.5 10.5L15 15" stroke="#000" stroke-width="2.4"/></g>
<!--/TB-->
</svg>
<!-- Plot window -->
<div id="plot" class="a"></div>
<div class="a" style="left:0;top:98px;width:1280px;height:1px;background:#8a9ab0"></div>
<div class="a" style="left:1px;top:99px;width:1278px;height:1px;background:#000"></div>
<div class="a" style="left:1px;top:99px;width:1px;height:647px;background:#000"></div>
<div class="a" style="left:0;top:98px;width:1px;height:649px;background:#74849c"></div>
<div class="a" style="left:1278px;top:99px;width:1px;height:647px;background:#8a96a8"></div>
<div class="a" style="left:1279px;top:98px;width:1px;height:649px;background:#c8d4e4"></div>
<div class="a" style="left:1px;top:746px;width:1278px;height:1px;background:#8a96a8"></div>
<div class="a" style="left:0;top:747px;width:1280px;height:1px;background:#c8d4e4"></div>

<svg class="a" style="left:0;top:0" width="1280" height="800" viewBox="0 0 1280 800">
<line x1="298.5" y1="117" x2="298.5" y2="691" stroke="#6e6e6e" stroke-width="1" stroke-dasharray="3 3" stroke-dashoffset="5"/>
<line x1="534.5" y1="117" x2="534.5" y2="691" stroke="#6e6e6e" stroke-width="1" stroke-dasharray="3 3" stroke-dashoffset="5"/>
<line x1="771.5" y1="117" x2="771.5" y2="691" stroke="#6e6e6e" stroke-width="1" stroke-dasharray="3 3" stroke-dashoffset="5"/>
<line x1="1007.5" y1="117" x2="1007.5" y2="691" stroke="#6e6e6e" stroke-width="1" stroke-dasharray="3 3" stroke-dashoffset="5"/>
<line x1="62" y1="232.5" x2="1243" y2="232.5" stroke="#6e6e6e" stroke-width="1" stroke-dasharray="3 3" stroke-dashoffset="5"/>
<line x1="62" y1="346.5" x2="1243" y2="346.5" stroke="#6e6e6e" stroke-width="1" stroke-dasharray="3 3" stroke-dashoffset="5"/>
<line x1="62" y1="461.5" x2="1243" y2="461.5" stroke="#6e6e6e" stroke-width="1" stroke-dasharray="3 3" stroke-dashoffset="5"/>
<line x1="62" y1="576.5" x2="1243" y2="576.5" stroke="#6e6e6e" stroke-width="1" stroke-dasharray="3 3" stroke-dashoffset="5"/>
<rect x="62.5" y="117.5" width="1181" height="574" fill="none" stroke="#6e6e6e" stroke-width="1"/>
<line x1="680" y1="645" x2="874.5" y2="182.5" stroke="#0c0c6c" stroke-width="3.5" stroke-linecap="round"/>
<rect x="62" y="418" width="718" height="3" fill="#0a0a78"/>
<rect x="777" y="418" width="3" height="273" fill="#0a0a78"/>
<polyline fill="none" stroke="#14148a" stroke-width="1.1" points="62,691.3 137,691.3 204,690.8 239,689 261,687.5 298.5,684 319,681 351,671 389,652 417,624.5 431,601 447.5,567.5 456,544 461,526 476,480 489,419 500,346 516,232 526.5,117"/>
<polyline fill="none" stroke="#1010c0" stroke-width="1.5" points="62,691.3 405,691 440,689.8 473,688.8 495,687.8 520,684.5 534,682.5 553,678.6 587,668.4 623,650.5 656,623 683.5,592.8 704,561 733,515.8"/>
<polyline fill="none" stroke="#1010c8" stroke-width="1.6" points="623,651.5 656,624 683.5,593.8 704,562 722,534"/>
<polygon fill="#0808e0" stroke="#10109a" stroke-width="0.6" points="882.43,116.0 880.77,123.53 878.96,131.05 877.04,138.58 874.99,146.1 872.84,153.63 870.59,161.15 868.24,168.68 865.82,176.2 863.32,183.73 860.75,191.25 858.12,198.78 855.44,206.31 852.71,213.83 849.94,221.36 847.13,228.88 844.33,236.41 841.55,243.93 838.73,251.46 835.9,258.98 833.06,266.51 830.2,274.03 827.33,281.56 824.43,289.08 821.53,296.61 818.63,304.14 815.72,311.66 812.81,319.19 809.9,326.71 806.99,334.24 804.07,341.76 801.14,349.29 798.19,356.81 795.24,364.34 792.28,371.86 789.31,379.39 786.32,386.92 783.33,394.44 780.31,401.97 777.27,409.49 774.21,417.02 771.2,424.54 768.18,432.07 765.11,439.59 762.01,447.12 758.84,454.64 755.63,462.17 752.37,469.69 749.03,477.22 745.62,484.75 742.11,492.27 738.51,499.8 734.81,507.32 730.98,514.85 727.01,522.37 722.87,529.9 718.58,537.42 714.13,544.95 709.51,552.47 704.72,560.0 706.72,560.0 711.7,552.47 716.5,544.95 721.14,537.42 725.62,529.9 729.96,522.37 734.2,514.85 738.34,507.32 742.37,499.8 746.29,492.27 750.11,484.75 753.85,477.22 757.5,469.69 761.08,462.17 764.57,454.64 768.0,447.12 771.38,439.59 774.71,432.07 778.0,424.54 781.22,417.02 784.34,409.49 787.43,401.97 790.49,394.44 793.54,386.92 796.58,379.39 799.6,371.86 802.61,364.34 805.62,356.81 808.62,349.29 811.64,341.76 814.66,334.24 817.69,326.71 820.71,319.19 823.74,311.66 826.76,304.14 829.78,296.61 832.79,289.08 835.8,281.56 838.82,274.03 841.84,266.51 844.84,258.98 847.83,251.46 850.8,243.93 853.74,236.41 856.63,228.88 859.44,221.36 862.21,213.83 864.94,206.31 867.62,198.78 870.25,191.25 872.82,183.73 875.32,176.2 877.74,168.68 880.09,161.15 882.34,153.63 884.49,146.1 886.54,138.58 888.46,131.05 890.27,123.53 891.93,116.0"/>
<polyline fill="none" stroke="#e8e8ff" stroke-width="0.9" stroke-dasharray="1.2 2.6" points="884.16,120.0 881.63,130.77 878.84,141.54 875.82,152.31 872.59,163.08 869.19,173.85 865.62,184.62 861.91,195.38 858.09,206.15 854.17,216.92 850.17,227.69 846.18,238.46 842.17,249.23 838.12,260.0 834.04,270.77 829.94,281.54 825.79,292.31 821.63,303.08 817.47,313.85 813.31,324.62 809.14,335.38 804.97,346.15 800.75,356.92 796.52,367.69 792.27,378.46 788.0,389.23 783.7,400.0 779.36,410.77 774.99,421.54 770.68,432.31 766.28,443.08 761.78,453.85 757.18,464.62 752.45,475.38 747.57,486.15 742.5,496.92 737.22,507.69 731.7,518.46 725.84,529.23 719.67,540.0"/>
<line x1="853.5" y1="233" x2="874.5" y2="182.5" stroke="#0c0c6c" stroke-width="3" stroke-linecap="round"/>
</svg>

<div class="t ax" style="right:1220px;top:111px">150.000u</div>
<div class="t ax" style="right:1220px;top:226px">120.000u</div>
<div class="t ax" style="right:1220px;top:340px">90.000u</div>
<div class="t ax" style="right:1220px;top:455px">60.000u</div>
<div class="t ax" style="right:1220px;top:570px">30.000u</div>
<div class="t ax" style="right:1220px;top:685px">0.000u</div>
<div class="t ax" style="left:434px;width:200px;text-align:center;top:694px">640.000m</div>
<div class="t ax" style="left:198px;width:200px;text-align:center;top:694px">520.000m</div>
<div class="t ax" style="left:671px;width:200px;text-align:center;top:694px">760.000m</div>
<div class="t ax" style="left:907px;width:200px;text-align:center;top:694px">880.000m</div>
<div class="t ax" style="left:1143px;width:200px;text-align:center;top:694px">1000.000m</div>
<div class="t ax" style="left:62px;top:694px">400.000m</div>
<div class="t ax" style="left:62px;top:710px;text-decoration:underline;text-decoration-skip-ink:none">Ib(Q3) (A)</div>
<div class="t ax" style="left:558px;top:726px">Vbe(Q3) (V)</div>
<div class="t ax" style="left:495px;top:103px">VT2 входные характеристики (анализ).CIR V3 = 0...6</div>
<!-- Status bar -->
<div class="a sp" style="left:1px;width:158px"></div>
<div class="a sp" style="left:161px;width:892px"></div>
<div class="a sp" style="left:1055px;width:223px"></div>
<div class="t st" style="left:2px">Режим линии</div>
<div class="t st" style="left:163px;font-size:14.7px">Двойное нажатие в окне для дополнительных опций.</div>

<!-- Taskbar -->
<div class="a" style="left:0;top:771px;width:1280px;height:1px;background:#c8d4e4"></div>
<svg class="a" style="left:0;top:766px" width="1280" height="34" viewBox="0 766 1280 34" shape-rendering="crispEdges">
<defs><pattern id="dith2" width="2" height="2" patternUnits="userSpaceOnUse"><rect width="2" height="2" fill="#8498b0"/><rect width="1" height="1" fill="#c4d0de"/><rect x="1" y="1" width="1" height="1" fill="#c4d0de"/></pattern></defs>
<!-- start button -->
<rect x="2" y="774" width="51" height="22" fill="#8498b0"/>
<rect x="2" y="774" width="51" height="1" fill="#d4dfec"/><rect x="2" y="774" width="1" height="22" fill="#d4dfec"/>
<rect x="2" y="795" width="52" height="1" fill="#141c28"/><rect x="53" y="774" width="1" height="22" fill="#141c28"/>
<rect x="3" y="794" width="50" height="1" fill="#56667e"/><rect x="52" y="775" width="1" height="20" fill="#56667e"/>
<g shape-rendering="auto">
<path d="M6 780Q8 778 11 779L10 785Q8 784 5 786Z" fill="#e04818"/>
<path d="M12 779Q15 780 18 779L17 785Q14 786 11 785Z" fill="#48b030"/>
<path d="M5 787Q7 785 10 786L9 792Q7 791 4 793Z" fill="#2868d8"/>
<path d="M11 786Q14 787 17 786L16 792Q13 793 10 792Z" fill="#f0c020"/>
</g>
<!-- task buttons -->
<rect x="59" y="774" width="160" height="22" fill="#8498b0"/>
<rect x="59" y="774" width="160" height="1" fill="#d4dfec"/><rect x="59" y="774" width="1" height="22" fill="#d4dfec"/>
<rect x="59" y="795" width="160" height="1" fill="#141c28"/><rect x="218" y="774" width="1" height="22" fill="#141c28"/>
<rect x="60" y="794" width="158" height="1" fill="#56667e"/><rect x="217" y="775" width="1" height="20" fill="#56667e"/>
<g shape-rendering="auto"><path d="M65 778L70 790L74 790L77 780" fill="none" stroke="#a07040" stroke-width="1.5"/><rect x="66" y="786" width="10" height="6" rx="2" fill="#c89860"/><path d="M67 786L66 779M70 786L71 778M73 786L76 779" stroke="#d03030" stroke-width="1.2"/><path d="M69 786L68 780" stroke="#30a030" stroke-width="1.2"/></g>

<rect x="222" y="774" width="160" height="22" fill="url(#dith2)"/>
<rect x="222" y="774" width="160" height="1" fill="#141c28"/><rect x="222" y="774" width="1" height="22" fill="#141c28"/>
<rect x="223" y="775" width="158" height="1" fill="#56667e"/><rect x="223" y="775" width="1" height="20" fill="#56667e"/>
<rect x="222" y="795" width="160" height="1" fill="#d4dfec"/><rect x="381" y="774" width="1" height="22" fill="#d4dfec"/>


<rect x="385" y="774" width="160" height="22" fill="#8498b0"/>
<rect x="385" y="774" width="160" height="1" fill="#d4dfec"/><rect x="385" y="774" width="1" height="22" fill="#d4dfec"/>
<rect x="385" y="795" width="160" height="1" fill="#141c28"/><rect x="544" y="774" width="1" height="22" fill="#141c28"/>
<rect x="386" y="794" width="158" height="1" fill="#56667e"/><rect x="543" y="775" width="1" height="20" fill="#56667e"/>
<rect x="389" y="778" width="16" height="15" fill="#f4f4f4" stroke="#606060" stroke-width="1"/><rect x="390" y="778" width="14" height="2" fill="#707070"/><rect x="391" y="783" width="2" height="10" fill="#d04060"/><path d="M395 781V793M398 781V793M401 781V793" stroke="#b0b0b0"/>

<rect x="548" y="774" width="160" height="22" fill="#8498b0"/>
<rect x="548" y="774" width="160" height="1" fill="#d4dfec"/><rect x="548" y="774" width="1" height="22" fill="#d4dfec"/>
<rect x="548" y="795" width="160" height="1" fill="#141c28"/><rect x="707" y="774" width="1" height="22" fill="#141c28"/>
<rect x="549" y="794" width="158" height="1" fill="#56667e"/><rect x="706" y="775" width="1" height="20" fill="#56667e"/>
<g shape-rendering="auto"><path d="M552 781H557L559 783H566V792H552Z" fill="#c8a020" stroke="#705010" stroke-width="0.8"/><path d="M553 785H567L565 792H552Z" fill="#f8e070"/></g>

<!-- tray -->
<rect x="1175" y="778" width="17" height="16" fill="#56667e"/>
<rect x="1196" y="774" width="1" height="23" fill="#56667e"/><rect x="1197" y="774" width="1" height="23" fill="#d4dfec"/>
<rect x="1202" y="774" width="76" height="1" fill="#56667e"/><rect x="1202" y="774" width="1" height="24" fill="#56667e"/>
<rect x="1202" y="797" width="76" height="1" fill="#d4dfec"/><rect x="1277" y="774" width="1" height="24" fill="#d4dfec"/>
<g shape-rendering="auto"><path d="M1211 784L1208 787L1211 790M1215 784L1212 787L1215 790" fill="none" stroke="#000" stroke-width="1.6"/>
<path d="M1225 777H1232L1235 781V790L1232 794H1225L1222 790V781Z" fill="#1818c0"/><path d="M1226 781L1231 790M1231 781L1226 790M1228.5 779V792" stroke="#e02020" stroke-width="1.4"/></g>
</svg>
<div class="t" style="left:1175px;top:779px;font-size:12px;color:#fff">RU</div>
<div class="t tt" style="left:1244px;top:780px;font-size:11px">19:27</div>
<div class="t" style="left:22px;top:779px;font-size:12.5px;font-weight:bold;color:#000">Пуск</div>
<div class="t tt" style="left:83px">вых харак - Paint</div>
<div class="t tt" style="left:248px;font-weight:bold;font-size:12px">MC-8 GUAP Edition -...</div>
<svg class="a" style="left:227px;top:778px" width="16" height="16" viewBox="0 0 16 16">
<rect x="0" y="0" width="16" height="16" fill="#000"/><rect x="1" y="1" width="14" height="14" fill="url(#g8)"/>
<text x="8" y="14" text-anchor="middle" font-family="Liberation Sans" font-weight="bold" font-size="15" fill="#000" stroke="#fff" stroke-width="2.2" paint-order="stroke">8</text>
</svg>
<div class="t tt" style="left:409px">Передаточные характер...</div>
<div class="t tt" style="left:572px">МОЯ РГР</div>

</body></html>
